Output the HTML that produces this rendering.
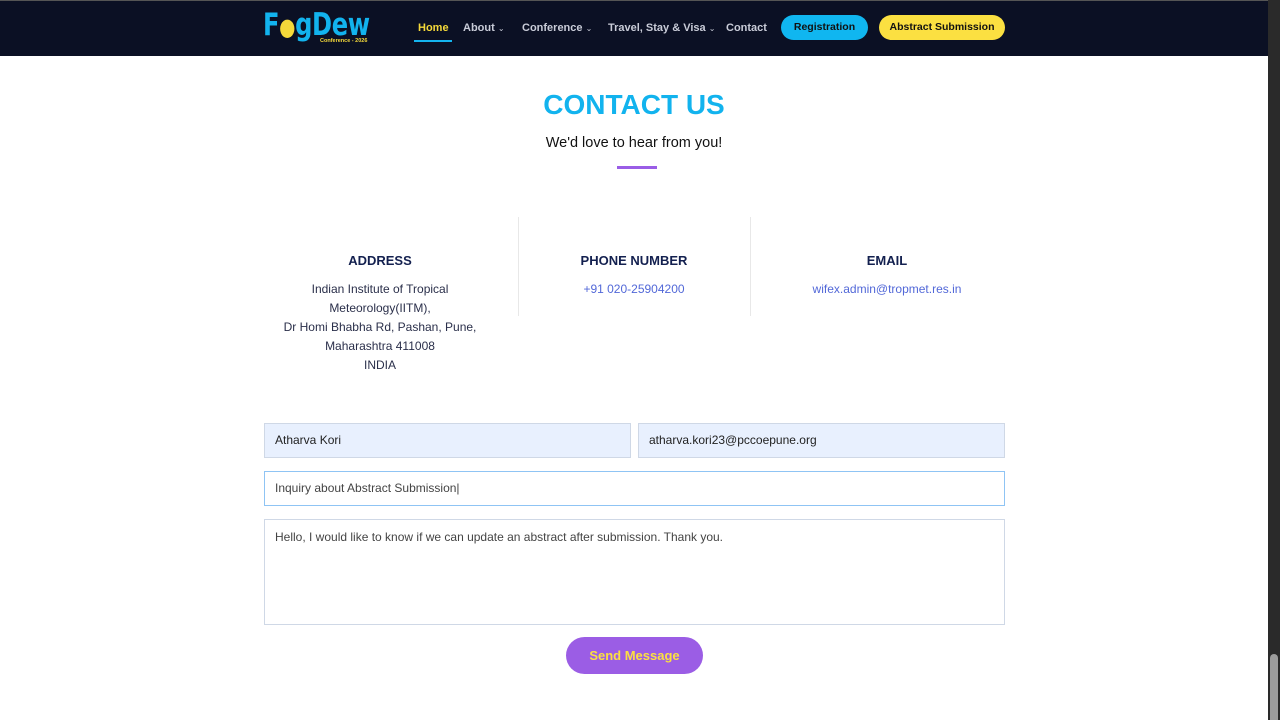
<!DOCTYPE html>
<html><head><meta charset="utf-8"><style>
*{box-sizing:border-box;margin:0;padding:0}
body{width:1280px;height:720px;overflow:hidden;background:#fff;font-family:"Liberation Sans",sans-serif;position:relative}
.nav{position:absolute;left:0;top:0;width:1268px;height:56px;background:#0b1024;border-top:1px solid #555}
.abs{position:absolute}
.logo{left:263px;top:6px;font-size:31px;font-weight:bold;color:#12b3ee;letter-spacing:-0.5px;font-family:"DejaVu Sans","Liberation Sans",sans-serif;white-space:nowrap;transform:scaleX(0.78);transform-origin:left top}
.menu{font-size:11px;font-weight:bold;color:#c9ccd8;top:21px;white-space:nowrap}
.menu i{font-style:normal;font-size:8px;font-weight:normal}
.btn{top:14px;height:25px;border-radius:13px;font-size:10.5px;font-weight:bold;color:#111;text-align:center;line-height:25px}
.sb{left:1268px;top:0;width:12px;height:720px;background:#2a2a2a}
.thumb{left:1270px;top:654px;width:8px;height:66px;background:#9c9c9c;border-radius:4px 4px 0 0}
h1{position:absolute;left:0;width:1268px;top:89px;text-align:center;font-size:28px;color:#12b3ee;font-weight:bold}
.sub{left:0;width:1268px;top:135px;text-align:center;font-size:14.5px;color:#111}
.bar{left:617px;top:166px;width:40px;height:3px;background:#9a5de6}
.col{text-align:center;width:240px}
.col h3{font-size:13px;color:#13204f;font-weight:bold;margin-bottom:12px}
.col p{font-size:12px;line-height:19px;color:#2a2f4a}
.col a{font-size:12px;color:#5268d8;text-decoration:none}
.div{width:1px;background:#e8e8e8;top:217px;height:99px}
.inp{height:35px;font-size:12px;color:#222;padding-left:10px;line-height:33px;border:1px solid #cfd8e6}
</style></head><body>
<div class="nav">
<div class="abs logo">F<span style="color:#f5d93a;font-size:24px">●</span>gDew</div>
<div class="abs" style="left:320px;top:37px;font-size:5.5px;color:#f5d93a;font-weight:bold">Conference - 2026</div>
<div class="abs menu" style="left:418px;color:#f5d93a">Home</div>
<div class="abs" style="left:414px;top:39px;width:38px;height:2px;background:#14b4ee"></div>
<div class="abs menu" style="left:463px">About <i>⌄</i></div>
<div class="abs menu" style="left:522px">Conference <i>⌄</i></div>
<div class="abs menu" style="left:608px">Travel, Stay &amp; Visa <i>⌄</i></div>
<div class="abs menu" style="left:726px">Contact</div>
<div class="abs btn" style="left:781px;width:87px;background:#10b6f0">Registration</div>
<div class="abs btn" style="left:879px;width:126px;background:#fbe041">Abstract Submission</div>
</div>
<div class="abs sb"></div><div class="abs thumb"></div>
<h1>CONTACT US</h1>
<div class="abs sub">We'd love to hear from you!</div>
<div class="abs bar"></div>
<div class="abs div" style="left:518px"></div>
<div class="abs div" style="left:750px"></div>
<div class="abs col" style="left:260px;top:253px"><h3>ADDRESS</h3><p>Indian Institute of Tropical<br>Meteorology(IITM),<br>Dr Homi Bhabha Rd, Pashan, Pune,<br>Maharashtra 411008<br>INDIA</p></div>
<div class="abs col" style="left:514px;top:253px"><h3>PHONE NUMBER</h3><p><a>+91 020-25904200</a></p></div>
<div class="abs col" style="left:767px;top:253px"><h3>EMAIL</h3><p><a>wifex.admin@tropmet.res.in</a></p></div>
<div class="abs inp" style="left:264px;top:423px;width:367px;background:#e8f0fe">Atharva Kori</div>
<div class="abs inp" style="left:638px;top:423px;width:367px;background:#e8f0fe">atharva.kori23@pccoepune.org</div>
<div class="abs inp" style="left:264px;top:471px;width:741px;border-color:#8fc4f4;color:#444">Inquiry about Abstract Submission|</div>
<div class="abs inp" style="left:264px;top:519px;width:741px;height:106px;color:#444;line-height:normal;padding-top:10px">Hello, I would like to know if we can update an abstract after submission. Thank you.</div>
<div class="abs" style="left:566px;top:637px;width:137px;height:37px;border-radius:19px;background:#9b5de5;color:#fbe041;font-weight:bold;font-size:13px;text-align:center;line-height:37px">Send Message</div>
</body></html>
